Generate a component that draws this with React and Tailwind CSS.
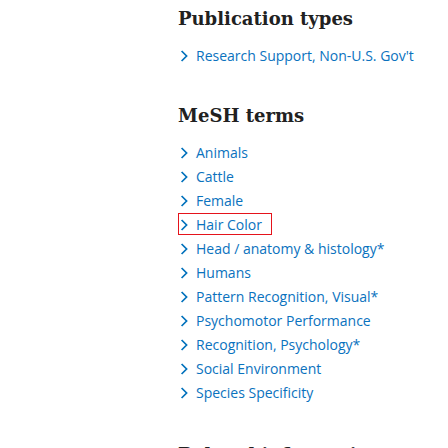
import React from "react";

const pubTypes = ["Research Support, Non-U.S. Gov't"];

const meshTerms = [
  "Animals",
  "Cattle",
  "Female",
  "Hair Color",
  "Head / anatomy & histology*",
  "Humans",
  "Pattern Recognition, Visual*",
  "Psychomotor Performance",
  "Recognition, Psychology*",
  "Social Environment",
  "Species Specificity",
];

function Chevron() {
  return (
    <svg width="8" height="12" viewBox="0 0 8 12" className="shrink-0">
      <path
        d="M1.6 1 L6.6 6 L1.6 11"
        fill="none"
        stroke="#0071bc"
        strokeWidth="1.7"
      />
    </svg>
  );
}

function TermList({ items, focused }) {
  return (
    <ul className="mt-[13px]">
      {items.map((item) => (
        <li key={item} className="relative flex items-center h-6">
          {item === focused && (
            <span className="absolute left-0 top-0 w-[94px] h-[22px] border border-[#e5131b]" />
          )}
          <a className="flex items-center pl-[2px] text-[14px] leading-6 text-[#0a72be] [font-family:'Open_Sans',sans-serif]">
            <Chevron />
            <span className="ml-[8px]">{item}</span>
          </a>
        </li>
      ))}
    </ul>
  );
}

function Heading({ children, className = "" }) {
  return (
    <h2
      className={`text-[18px] leading-[25px] font-bold text-[#212121] [font-family:'DejaVu_Serif',serif] ${className}`}
    >
      {children}
    </h2>
  );
}

export default function App() {
  return (
    <div className="w-[448px] h-[448px] overflow-hidden bg-white pl-[178px] pt-[6px]">
      <Heading>Publication types</Heading>
      <TermList items={pubTypes} />

      <Heading className="mt-[35px]">MeSH terms</Heading>
      <TermList items={meshTerms} focused="Hair Color" />

      <Heading className="mt-[37px]">Related information</Heading>
    </div>
  );
}
